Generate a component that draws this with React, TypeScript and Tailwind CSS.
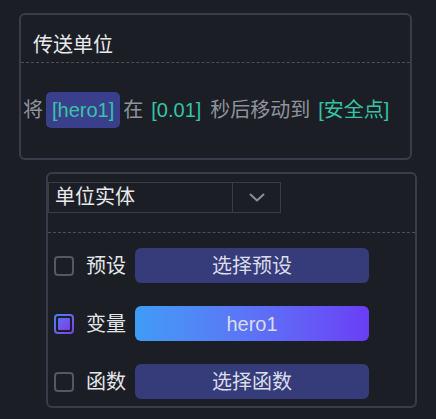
const FONT = "font-['Liberation_Sans','Noto_Sans_CJK_SC',sans-serif]";

interface OptionRowProps {
  label: string;
  value: string;
  checked?: boolean;
}

const CheckBox = ({ checked }: { checked?: boolean }) =>
  checked ? (
    <div className="w-5 h-5 rounded-[4px] p-[2px] bg-linear-to-br from-[#3b82f6] to-[#7c3aed]">
      <div className="w-full h-full rounded-[2px] bg-[#1b1e25] p-[2px]">
        <div className="w-full h-full rounded-[1px] bg-linear-to-br from-[#5b6cf0] to-[#7c3aed]" />
      </div>
    </div>
  ) : (
    <div className="w-5 h-5 rounded-[4px] border-2 border-[#55585f]" />
  );

const OptionRow = ({ label, value, checked }: OptionRowProps) => (
  <div className="flex items-center">
    <CheckBox checked={checked} />
    <span className="ml-3 w-[39px] text-[20px] leading-6 text-[#e4e6ea] whitespace-nowrap">{label}</span>
    <button
      className={
        'ml-[10px] w-[234px] h-[35px] rounded-md text-[20px] text-[#dadcec] ' +
        (checked ? 'bg-linear-to-r from-[#3e9cf6] to-[#6a3cf6]' : 'bg-[#363b79]')
      }
    >
      {value}
    </button>
  </div>
);

export default function App() {
  return (
    <div className={`w-[436px] h-[419px] bg-[#1b1e25] overflow-hidden pt-[13px] ${FONT}`}>
      <section className="ml-[19px] w-[393px] h-[147px] border-2 border-[#393d47] rounded-md">
        <h2 className="pt-[18px] pl-[12px] text-[20px] leading-6 text-[#e8e9ec]">传送单位</h2>
        <div className="mt-[5px] border-t border-dashed border-[#4b4f59]" />
        <p className="mt-[29px] pl-[2px] flex items-center text-[20px] text-[#8f939b] whitespace-nowrap">
          <span>将</span>
          <span className="ml-[3px] px-[6px] h-9 flex items-center rounded-[5px] bg-[#3a3f8c] text-[#36c4a5]">[hero1]</span>
          <span className="ml-[3px]">在</span>
          <span className="ml-[8px] text-[#36c4a5]">[0.01]</span>
          <span className="ml-[9px]">秒后移动到</span>
          <span className="ml-[8px] text-[#36c4a5]">[安全点]</span>
        </p>
      </section>

      <section className="mt-[12px] ml-[46px] w-[371px] h-[236px] border-2 border-[#393d47] rounded-md">
        <div className="mt-[8px] w-[233px] h-[31px] border border-[#393d47] flex">
          <span className="flex-1 pl-[6px] text-[20px] leading-[29px] text-[#e8e9ec]">单位实体</span>
          <span className="w-[48px] border-l border-[#393d47] flex items-center justify-center">
            <svg width="16" height="9" viewBox="0 0 16 9" fill="none">
              <path d="M1 1l7 6.5L15 1" stroke="#8a8d96" strokeWidth="2" strokeLinejoin="round" />
            </svg>
          </span>
        </div>
        <div className="mt-[19px] border-t border-dashed border-[#4b4f59]" />
        <div className="mt-[15px] pl-[6px] flex flex-col gap-[23px]">
          <OptionRow label="预设" value="选择预设" />
          <OptionRow label="变量" value="hero1" checked />
          <OptionRow label="函数" value="选择函数" />
        </div>
      </section>
    </div>
  );
}
